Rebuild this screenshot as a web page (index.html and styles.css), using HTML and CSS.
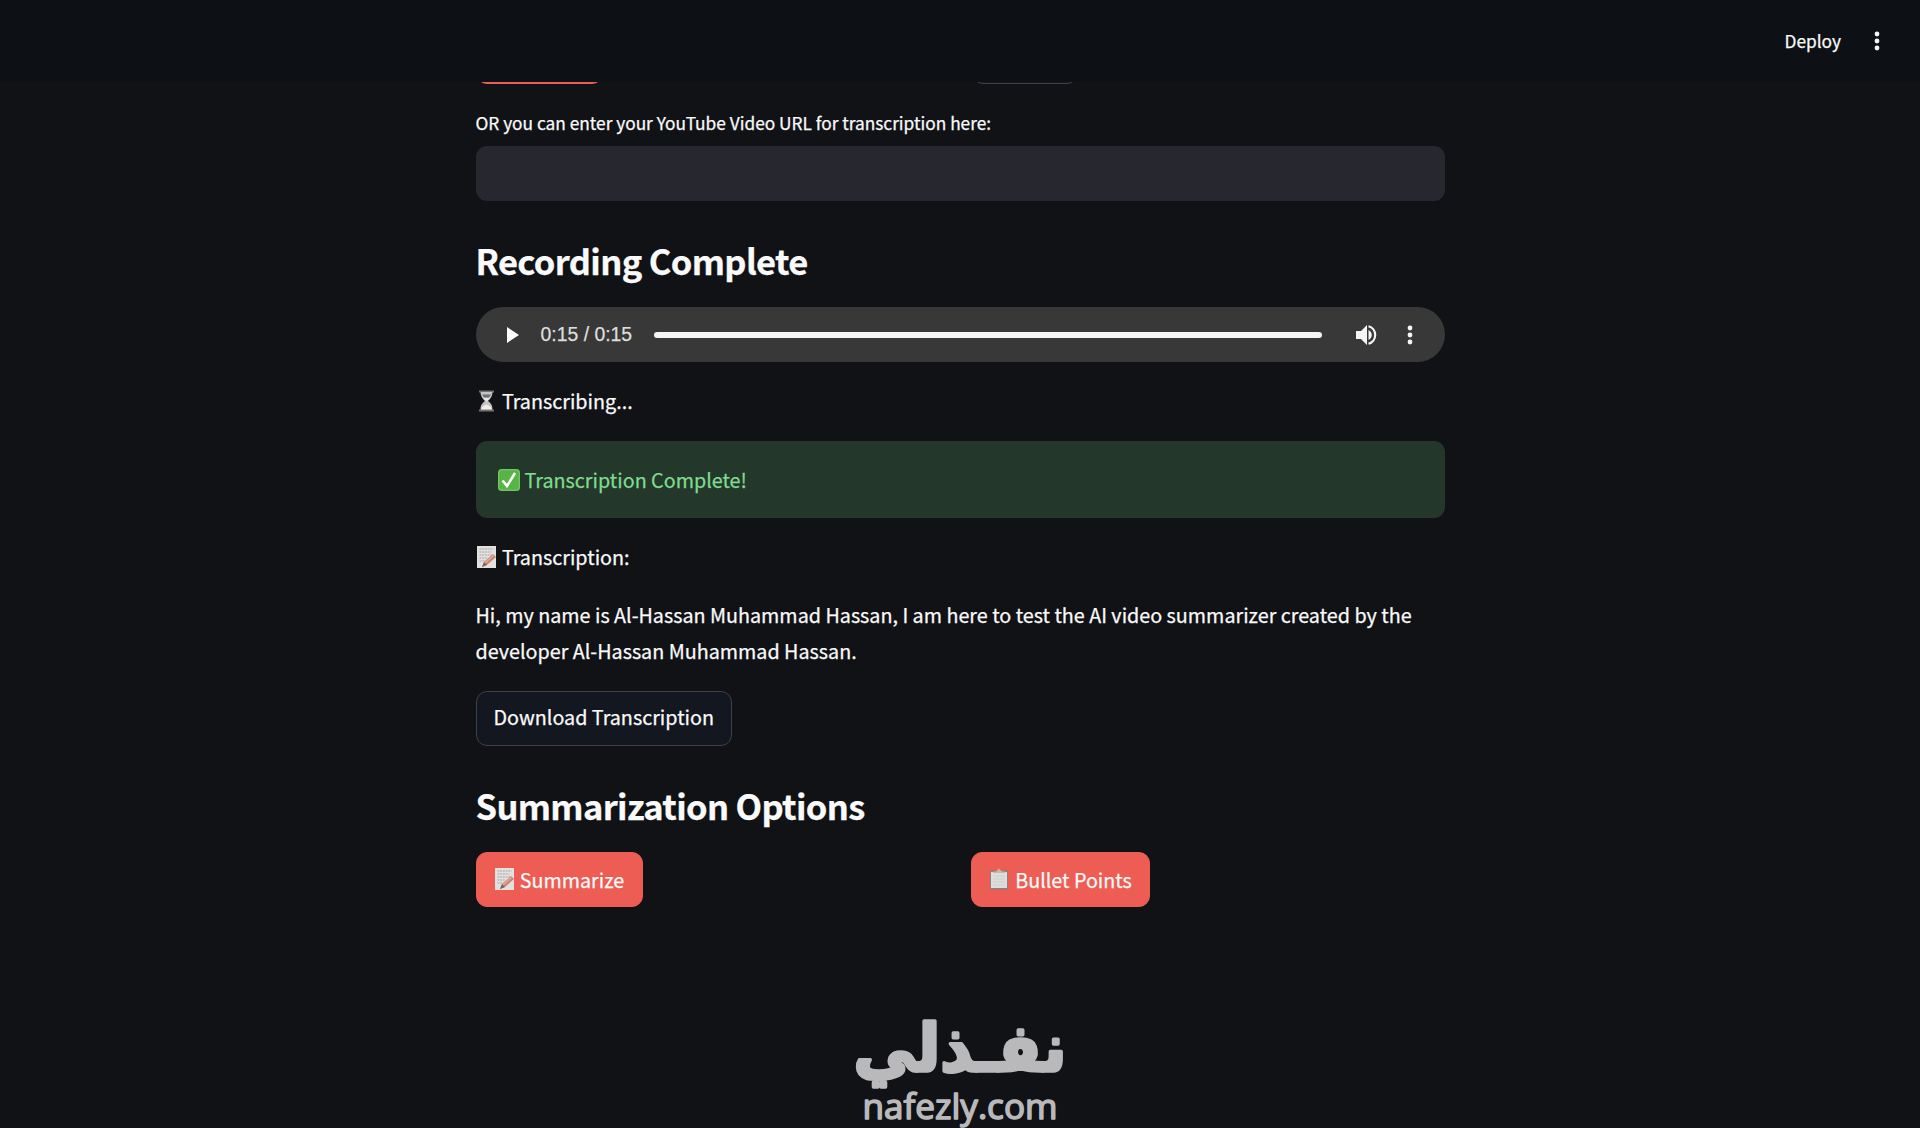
FILE: index.html
```html
<!DOCTYPE html>
<html lang="en">
<head>
  <meta charset="UTF-8">
  <meta name="viewport" content="width=device-width, initial-scale=1.0">
  <title>AI Video Summarizer</title>
  <link rel="stylesheet" href="styles.css">
</head>

<body>
  <svg class="sprite" aria-hidden="true">
    <symbol id="icon-dots" viewBox="0 0 6 20">
      <circle cx="3" cy="3" r="2.4"/>
      <circle cx="3" cy="10" r="2.4"/>
      <circle cx="3" cy="17" r="2.4"/>
    </symbol>
    <symbol id="icon-memo" viewBox="0 0 20 22">
      <rect x="1" width="19" height="22" fill="#e3e0e0"/>
      <path d="M3.500 3h14M3.500 6h12M3.500 9h13M3.500 12h8M3.500 15h6" stroke="#aaa6a8" stroke-width="1" stroke-dasharray="2 .7"/>
      <path d="M6 21l2-5 9-8 3 3-9 8z" fill="#c98370"/>
      <path d="M8.500 17.500l9-8" stroke="#e8b09c" stroke-width="1.200"/>
      <path d="M6 21l2-5 3 3z" fill="#756660"/>
    </symbol>
  </svg>

  <header class="header">
    <span class="deploy">Deploy</span>
    <svg class="dots"><use href="#icon-dots"/></svg>
  </header>

  <main class="main">
    <div class="row record-row">
      <div class="col"><button class="btn btn-primary btn-start"></button></div>
      <div class="col"><button class="btn btn-stop"></button></div>
    </div>

    <label class="label" for="url">OR you can enter your YouTube Video URL for transcription here:</label>
    <input class="input" id="url" type="text">

    <h2 class="title">Recording Complete</h2>
    <div class="player">
      <svg class="play" viewBox="0 0 12 16"><path d="M0 0v16l12-8z"/></svg>
      <span class="time">0:15 / 0:15</span>
      <div class="track"></div>
      <svg class="volume" viewBox="0 0 21 20">
        <path d="M0 6v8h5l6 6V0L5 6zM12.500 5v10c2-1 3.300-2.800 3.300-5S14.500 6 12.500 5z"/>
        <path d="M12.500 1.300a9 9 0 0 1 0 17.400" fill="none" stroke="#f5f5f5" stroke-width="2.200"/>
      </svg>
      <svg class="dots"><use href="#icon-dots"/></svg>
    </div>

    <p class="text">
      <svg class="emoji" viewBox="0 0 20 22">
        <path d="M3 .500h15v2H3zM3 19.500h15v2H3z" fill="#77716e"/>
        <path d="M4.500 2h12c0 4-2 7-4.500 9 2.500 2 4.500 4 4.500 8.500h-12C4.500 15 6.500 13 9 11 6.500 9 4.500 6 4.500 2z" fill="#c4c5c7"/>
        <path d="M6 4.500h9l-2 3H8z" fill="#6e7072"/>
        <path d="M7 8h7l-3.500 3.500z" fill="#ece9e5"/>
        <path d="M5 19.500c1-3 3-4 5.500-5 2.500 1 4.500 2 5.500 5z" fill="#f4eeea"/>
      </svg>
      Transcribing...
    </p>

    <div class="alert">
      <svg class="emoji" viewBox="0 0 22 22">
        <rect width="22" height="22" rx="3.500" fill="#57b548"/>
        <rect x=".7" y=".7" width="20.600" height="20.600" rx="3" fill="none" stroke="#7ccb6c"/>
        <path d="M4.500 11.500l4.500 5.500 8-13" fill="none" stroke="#fff" stroke-width="2.600"/>
      </svg>
      Transcription Complete!
    </div>

    <p class="text"><svg class="emoji"><use href="#icon-memo"/></svg> Transcription:</p>
    <p class="text transcript">Hi, my name is Al-Hassan Muhammad Hassan, I am here to test the AI video summarizer created by the developer Al-Hassan Muhammad Hassan.</p>
    <button class="btn btn-download">Download Transcription</button>

    <h2 class="title title-options">Summarization Options</h2>
    <div class="row">
      <div class="col">
        <button class="btn btn-primary btn-summarize"><svg class="emoji"><use href="#icon-memo"/></svg> Summarize</button>
      </div>
      <div class="col">
        <button class="btn btn-primary btn-bullets">
          <svg class="emoji" viewBox="0 0 20 22">
            <path d="M1 2.500h18v19H1z" fill="#89817d"/>
            <path d="M2 4h16v16H2z" fill="#dedddd"/>
            <path d="M4 3.500h3l3-3 3 3h3v1.500H4z" fill="#c9b8a8"/>
            <path d="M4 8h12M4 11h12M4 14h12M4 17h12" stroke="#cfcfcf"/>
          </svg>
          Bullet Points
        </button>
      </div>
    </div>
  </main>

  <svg class="watermark" viewBox="0 0 220 148" role="img">
    <text class="mark-ar" x="107" y="91" text-anchor="middle" textLength="213" lengthAdjust="spacingAndGlyphs">نفـذلي</text>
    <text class="mark-en" x="107" y="139" text-anchor="middle" textLength="195" lengthAdjust="spacingAndGlyphs">nafezly.com</text>
  </svg>
</body>
</html>
```
FILE: styles.css
```css
* {
  box-sizing: border-box;
  padding: 0;
  margin: 0;
}
html, body {
  height: 100%;
  overflow: hidden;
}
body {
  background-color: #111216;
  color: #fafafa;
  font-family: "Noto Sans CJK SC", "Noto Sans CJK JP", sans-serif;
  font-size: 19.74px;
  -webkit-text-stroke: 0.25px;
}
.sprite {
  position: absolute;
  width: 0;
  height: 0;
}
.header {
  height: 82px;
  background-color: #0d1015;
  display: flex;
  justify-content: flex-end;
  align-items: center;
  padding-right: 40px;
}
.deploy {
  font-size: 17.3px;
  margin: 0 33px 2px 0;
}
.dots {
  width: 6px;
  height: 20px;
  fill: #f5f5f5;
}
.main {
  width: 969px;
  height: 1046px;
  margin: 0 auto;
  overflow: hidden;
}
.row {
  display: flex;
  gap: 22px;
}
.col {
  flex: 1;
}
.record-row {
  margin-top: -53px;
}
.btn {
  height: 55px;
  padding: 0 17px;
  border: 1px solid #404147;
  border-radius: 11px;
  background-color: #131720;
  color: #fafafa;
  font: inherit;
  -webkit-text-stroke: inherit;
  display: flex;
  align-items: center;
  justify-content: center;
}
.btn-primary {
  border-color: #ee5d54;
  background-color: #ee5d54;
}
.btn-start { width: 127px; }
.btn-stop { width: 106px; margin-left: 1px; }
.btn-download { padding-bottom: 3px; }
.btn-summarize { width: 167px; }
.btn-bullets { width: 179px; }
.label {
  display: block;
  margin-top: 24px;
  font-size: 17.3px;
  line-height: 30px;
}
.input {
  display: block;
  width: 100%;
  height: 55px;
  margin-top: 8px;
  padding: 0 16px;
  border: 0;
  border-radius: 11px;
  background-color: #272730;
  color: inherit;
  font: inherit;
}
.title {
  margin-top: 36px;
  font-size: 34.5px;
  font-weight: 700;
  letter-spacing: -0.65px;
  line-height: 46px;
}
.player {
  height: 55px;
  margin-top: 24px;
  padding: 0 32px 0 31px;
  border-radius: 28px;
  background-color: #383838;
  display: flex;
  align-items: center;
}
.play {
  width: 12px;
  height: 16px;
  fill: #fff;
}
.time {
  width: 92px;
  margin: 0 21px 0 22px;
  color: #dedede;
  font-family: "Liberation Sans", Arial, sans-serif;
  font-size: 19.4px;
  white-space: nowrap;
}
.track {
  flex: 1;
  height: 6px;
  border-radius: 3px;
  background-color: #f5f5f5;
}
.volume {
  width: 21px;
  height: 20px;
  margin: 0 30px 0 34px;
  fill: #f5f5f5;
}
.text {
  margin-top: 21px;
  line-height: 35.2px;
}
.emoji {
  width: 20px;
  height: 22px;
  margin-right: 6px;
  flex: none;
  vertical-align: -3px;
}
.text .emoji {
  margin-right: 2px;
}
.alert {
  height: 77px;
  margin-top: 23px;
  padding: 0 22px;
  border-radius: 11px;
  background-color: #23372b;
  color: #80db8e;
  display: flex;
  align-items: center;
}
.alert .emoji {
  width: 22px;
  margin-right: 5px;
}
.transcript {
  margin: 23px 0;
}
.title-options {
  margin: 36px 0 24px;
}

/* logo laid over the bottom of the page */
.watermark {
  position: absolute;
  left: 853px;
  top: 980px;
  width: 220px;
  height: 148px;
  fill: #b9b9bb;
  stroke: #b9b9bb;
  stroke-linejoin: round;
  -webkit-text-stroke: 0;
}
.mark-ar {
  font-family: "DejaVu Sans", sans-serif;
  font-size: 66px;
  font-weight: 700;
  direction: rtl;
  stroke-width: 3.5px;
}
.mark-en {
  font-family: "Open Sans", sans-serif;
  font-size: 34px;
  font-weight: 400;
  stroke-width: 1.5px;
}
```
